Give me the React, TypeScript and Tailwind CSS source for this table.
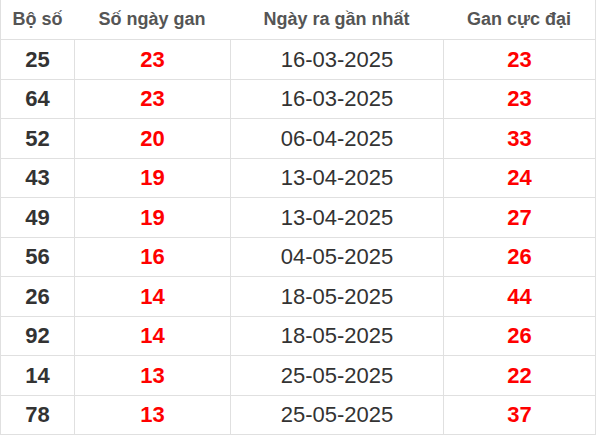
import React from "react";

const rows = [
  { so: "25", gan: 23, ngay: "16-03-2025", max: 23 },
  { so: "64", gan: 23, ngay: "16-03-2025", max: 23 },
  { so: "52", gan: 20, ngay: "06-04-2025", max: 33 },
  { so: "43", gan: 19, ngay: "13-04-2025", max: 24 },
  { so: "49", gan: 19, ngay: "13-04-2025", max: 27 },
  { so: "56", gan: 16, ngay: "04-05-2025", max: 26 },
  { so: "26", gan: 14, ngay: "18-05-2025", max: 44 },
  { so: "92", gan: 14, ngay: "18-05-2025", max: 26 },
  { so: "14", gan: 13, ngay: "25-05-2025", max: 22 },
  { so: "78", gan: 13, ngay: "25-05-2025", max: 37 },
];

export default function App() {
  return (
    <div className="w-[596px] bg-white font-['Liberation_Sans',Arial,sans-serif]">
      <div className="grid grid-cols-[73px_156px_213px_153px] h-[39px] border-l border-[#e0e0e0] text-[18px] font-bold text-[#555]">
        <div className="flex items-center justify-center">Bộ số</div>
        <div className="flex items-center justify-center">Số ngày gan</div>
        <div className="flex items-center justify-center">Ngày ra gần nhất</div>
        <div className="flex items-center justify-center border-r border-[#e0e0e0]">Gan cực đại</div>
      </div>
      <div className="border-b border-[#e0e0e0]">
        {rows.map((r, i) => (
          <div
            key={i}
            className="grid grid-cols-[73px_156px_213px_153px] h-[39.5px] border-t border-l border-[#e0e0e0] text-[22px] text-[#333]"
          >
            <div className="flex items-center justify-center font-bold">{r.so}</div>
            <div className="flex items-center justify-center border-l border-[#e0e0e0] font-bold text-[#ff0000]">{r.gan}</div>
            <div className="flex items-center justify-center border-l border-[#e0e0e0]">{r.ngay}</div>
            <div className="flex items-center justify-center border-l border-r border-[#e0e0e0] font-bold text-[#ff0000]">{r.max}</div>
          </div>
        ))}
      </div>
    </div>
  );
}
